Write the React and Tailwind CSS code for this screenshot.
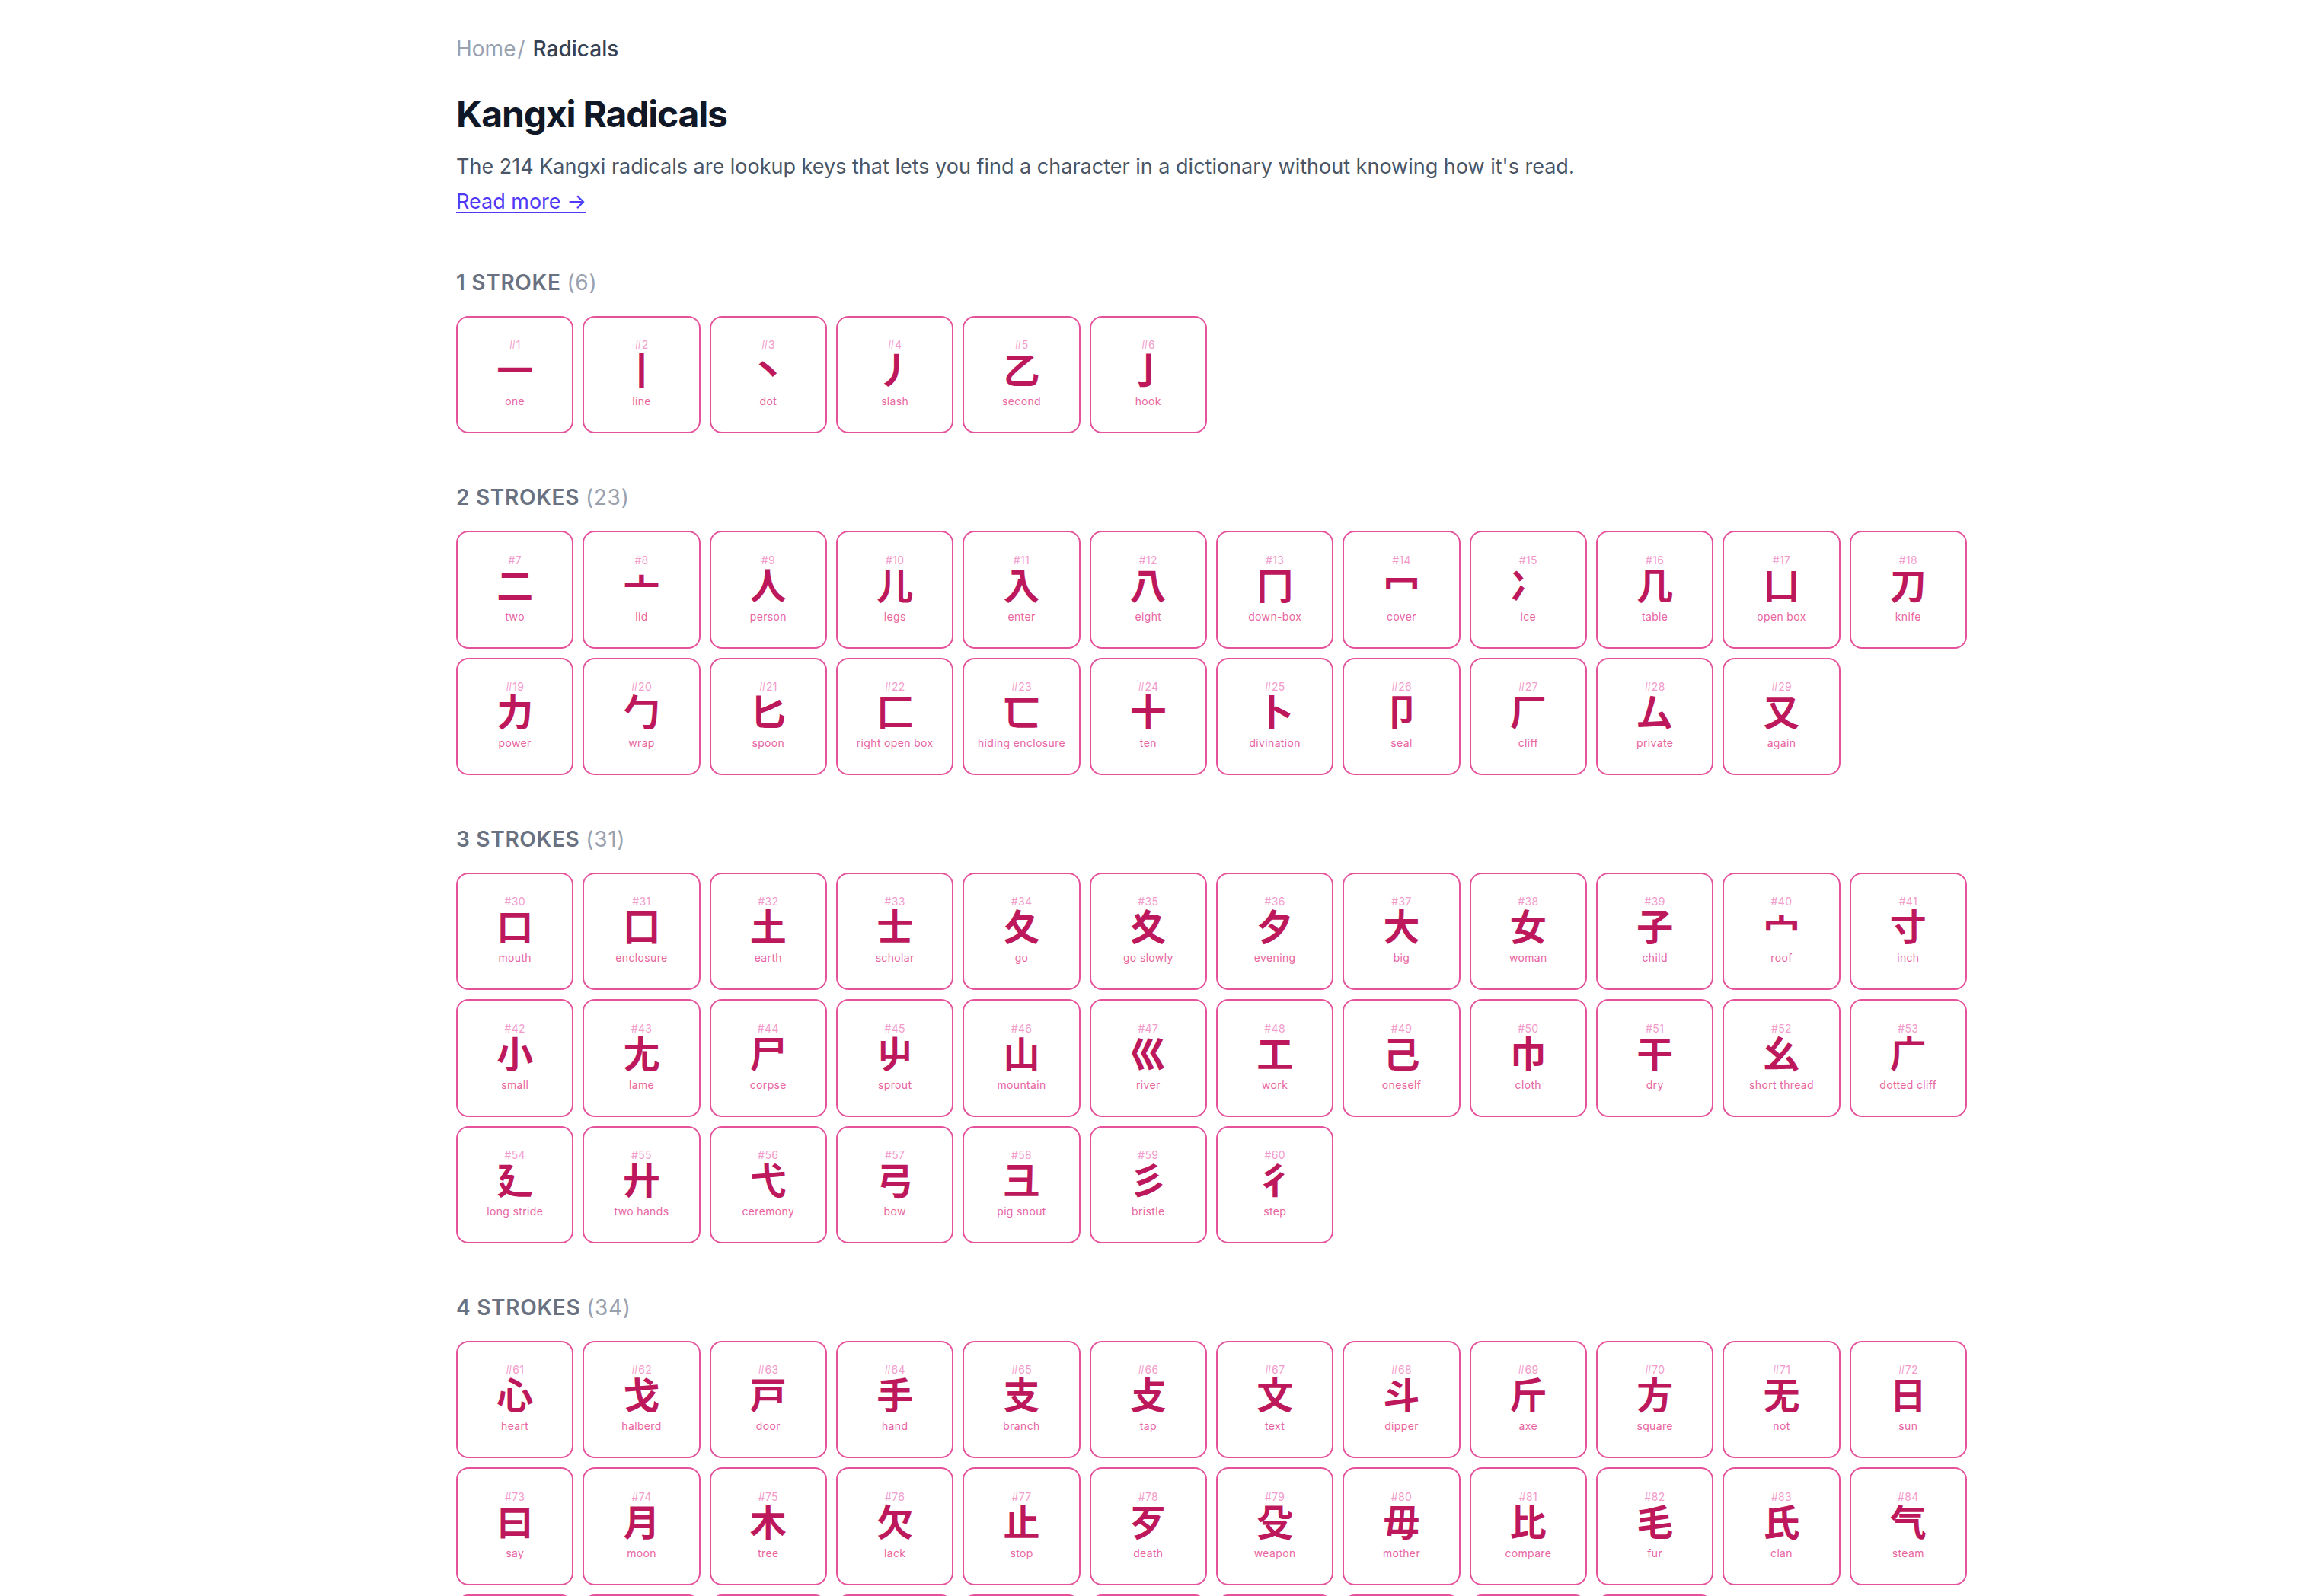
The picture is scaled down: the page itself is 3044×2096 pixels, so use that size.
const groups = [
  {
    strokes: 1,
    start: 1,
    radicals: [
      ['一', 'one'], ['丨', 'line'], ['丶', 'dot'], ['丿', 'slash'], ['乙', 'second'], ['亅', 'hook'],
    ],
  },
  {
    strokes: 2,
    start: 7,
    radicals: [
      ['二', 'two'], ['亠', 'lid'], ['人', 'person'], ['儿', 'legs'], ['入', 'enter'], ['八', 'eight'],
      ['冂', 'down-box'], ['冖', 'cover'], ['冫', 'ice'], ['几', 'table'], ['凵', 'open box'], ['刀', 'knife'],
      ['力', 'power'], ['勹', 'wrap'], ['匕', 'spoon'], ['匚', 'right open box'], ['匸', 'hiding enclosure'], ['十', 'ten'],
      ['卜', 'divination'], ['卩', 'seal'], ['厂', 'cliff'], ['厶', 'private'], ['又', 'again'],
    ],
  },
  {
    strokes: 3,
    start: 30,
    radicals: [
      ['口', 'mouth'], ['囗', 'enclosure'], ['土', 'earth'], ['士', 'scholar'], ['夂', 'go'], ['夊', 'go slowly'],
      ['夕', 'evening'], ['大', 'big'], ['女', 'woman'], ['子', 'child'], ['宀', 'roof'], ['寸', 'inch'],
      ['小', 'small'], ['尢', 'lame'], ['尸', 'corpse'], ['屮', 'sprout'], ['山', 'mountain'], ['巛', 'river'],
      ['工', 'work'], ['己', 'oneself'], ['巾', 'cloth'], ['干', 'dry'], ['幺', 'short thread'], ['广', 'dotted cliff'],
      ['廴', 'long stride'], ['廾', 'two hands'], ['弋', 'ceremony'], ['弓', 'bow'], ['彐', 'pig snout'], ['彡', 'bristle'],
      ['彳', 'step'],
    ],
  },
  {
    strokes: 4,
    start: 61,
    radicals: [
      ['心', 'heart'], ['戈', 'halberd'], ['戸', 'door'], ['手', 'hand'], ['支', 'branch'], ['攴', 'tap'],
      ['文', 'text'], ['斗', 'dipper'], ['斤', 'axe'], ['方', 'square'], ['无', 'not'], ['日', 'sun'],
      ['曰', 'say'], ['月', 'moon'], ['木', 'tree'], ['欠', 'lack'], ['止', 'stop'], ['歹', 'death'],
      ['殳', 'weapon'], ['毋', 'mother'], ['比', 'compare'], ['毛', 'fur'], ['氏', 'clan'], ['气', 'steam'],
      ['水', 'water'], ['火', 'fire'], ['爪', 'claw'], ['父', 'father'], ['爻', 'trigrams'], ['爿', 'split wood'],
      ['片', 'slice'], ['牙', 'fang'], ['牛', 'cow'], ['犬', 'dog'],
    ],
  },
]

function RadicalCard({ number, character, meaning }) {
  return (
    <a
      href={`#radical-${number}`}
      className="flex aspect-square flex-col items-center justify-center rounded-2xl border-2 border-[#e5529b] pb-1 text-center"
    >
      <span className="text-[14px] leading-5 tracking-wide text-[#f29ccb]">#{number}</span>
      <span
        lang="ja"
        className="mb-1.5 font-['Inter','Noto_Sans_CJK_JP',sans-serif] text-[48px] leading-[48px] font-bold text-[#be185d]"
      >
        {character}
      </span>
      <span className="text-[14px] leading-5 tracking-wide whitespace-nowrap text-[#e8659f]">{meaning}</span>
    </a>
  )
}

function StrokeSection({ strokes, start, radicals }) {
  return (
    <section>
      <h2 className="mb-6 text-[28px] leading-10 font-semibold tracking-wide text-gray-500 uppercase">
        {strokes} {strokes === 1 ? 'stroke' : 'strokes'}{' '}
        <span className="font-normal text-gray-400">({radicals.length})</span>
      </h2>
      <div className="grid grid-cols-12 gap-3">
        {radicals.map(([character, meaning], i) => (
          <RadicalCard key={character} number={start + i} character={character} meaning={meaning} />
        ))}
      </div>
    </section>
  )
}

export default function App() {
  return (
    <div className="min-h-screen bg-white font-['Inter',sans-serif]">
      <main className="mx-auto max-w-[2122px] pt-11 pb-16 pl-[138px]">
        <nav aria-label="Breadcrumb" className="flex text-[28px] leading-10">
          <a href="#home" className="text-gray-400">Home</a>
          <span className="ml-0.5 text-gray-400">/</span>
          <span className="ml-2.5 font-medium text-gray-700">Radicals</span>
        </nav>

        <h1 className="mt-10 text-[48px] leading-[52px] font-bold tracking-tight text-gray-900">Kangxi Radicals</h1>
        <p className="mt-5 text-[27px] leading-[46px] text-gray-600">
          The 214 Kangxi radicals are lookup keys that lets you find a character in a dictionary without knowing how it's read.
          <br />
          <a href="#about" className="text-indigo-600 underline decoration-2 underline-offset-4">Read more →</a>
        </p>

        <div className="mt-[63px] flex flex-col gap-16">
          {groups.map((group) => (
            <StrokeSection key={group.strokes} {...group} />
          ))}
        </div>
      </main>
    </div>
  )
}
